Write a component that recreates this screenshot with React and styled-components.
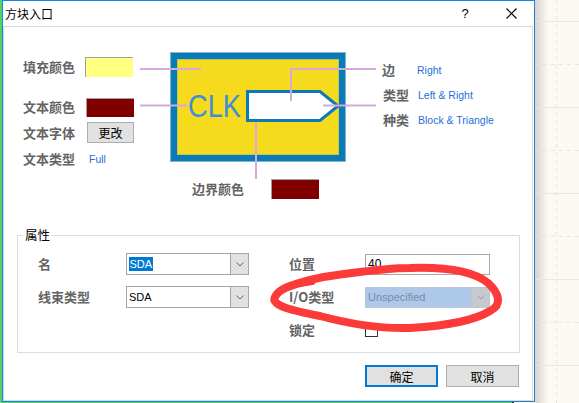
import React from 'react';
import styled, { createGlobalStyle } from 'styled-components';

const GlobalStyle = createGlobalStyle`
  html, body { margin: 0; padding: 0; }
  body {
    width: 579px; height: 403px; overflow: hidden;
    background: #fcf9f4;
    font-family: "Noto Sans CJK SC", "Noto Sans", sans-serif;
  }
`;

const Page = styled.div`
  position: relative;
  display: flex;
  width: 579px;
  height: 403px;
  overflow: hidden;
`;

const EdgeStrip = styled.div`
  flex: none;
  width: 2px;
  background: #50d46e;
`;

const DialogColumn = styled.div`
  flex: none;
  width: 533px;
  display: flex;
  flex-direction: column;
`;

const BottomStrip = styled.div`
  height: 1px;
  background: linear-gradient(to right, #50d46e 510px, #2f2f2f 510px, #2f2f2f 512px, transparent 512px);
`;

const Dialog = styled.div`
  box-sizing: border-box;
  height: 402px;
  border: 1px solid #1a84dc;
  background: #fff;
  display: flex;
  flex-direction: column;
`;

const TitleBar = styled.div`
  flex: none;
  height: 25px;
  display: flex;
  align-items: center;
  padding-left: 2px;
`;

const Title = styled.span`
  flex: 1;
  font-size: 12px;
  line-height: 16px;
  color: #000;
`;

const CaptionButton = styled.div`
  width: 46px;
  height: 25px;
  display: flex;
  align-items: center;
  justify-content: center;
  font: 13px "Liberation Sans", Arial, sans-serif;
  color: #000;
`;

const ClientArea = styled.div`
  flex: 1;
  box-sizing: border-box;
  margin-right: 1px;
  border: 1px solid #d9d9d9;
  display: flex;
  flex-direction: column;
`;

const TopSection = styled.div`
  height: 208px;
  display: flex;
  align-items: flex-start;
`;

const LeftFields = styled.div`
  margin: 30px 0 0 19px;
  display: flex;
  flex-direction: column;
`;

const FieldRow = styled.div`
  display: flex;
  align-items: center;
  height: ${p => p.$h || 20}px;
  margin-top: ${p => p.$gap || 0}px;
`;

const Label = styled.span`
  width: ${p => p.$w || 62}px;
  flex: none;
  font-size: 13px;
  font-weight: 700;
  line-height: 18px;
  color: #646464;
  white-space: nowrap;
`;

const Swatch = styled.div`
  box-sizing: border-box;
  width: 48px;
  height: ${p => p.$h || 20}px;
  margin-left: ${p => p.$shift || 0}px;
  background: ${p => p.$color};
  border-top: 1px solid #a0a0a0;
  border-left: 1px solid #a0a0a0;
`;

const SmallButton = styled.button`
  box-sizing: border-box;
  width: 47px;
  height: 21px;
  margin-left: 2px;
  padding: 0;
  background: #e1e1e1;
  border: 1px solid #adadad;
  font-family: "Noto Sans CJK SC", sans-serif;
  font-size: 12px;
  color: #000;
`;

const LinkValue = styled.span`
  font: 10.5px "Liberation Sans", Arial, sans-serif;
  color: #1f6fd6;
  margin-left: ${p => p.$shift || 0}px;
  white-space: nowrap;
`;

const DiagramColumn = styled.div`
  margin: 25px 0 0 6px;
  display: flex;
  flex-direction: column;
`;

const DiagramSvg = styled.svg`
  display: block;
`;

const BorderRow = styled.div`
  display: flex;
  align-items: center;
  height: 20px;
  padding-left: 52px;
`;

const RightFields = styled.div`
  margin: 30px 0 0 5px;
  display: grid;
  grid-template-columns: 35px auto;
  grid-auto-rows: 25px;
  align-items: center;
`;

const RightLabel = styled(Label)`
  width: auto;
  padding-left: ${p => p.$shift || 0}px;
`;

const GroupBox = styled.div`
  position: relative;
  box-sizing: border-box;
  height: 118px;
  margin: 0 12px 0 13px;
  border: 1px solid #dcdcdc;
  padding: 17px 0 0 20px;
`;

const Legend = styled.span`
  position: absolute;
  top: -10px;
  left: 5px;
  padding: 0 2px;
  background: #fff;
  font-size: 12.5px;
  line-height: 18px;
  color: #000;
`;

const PropGrid = styled.div`
  display: grid;
  grid-template-columns: 88px 123px 40px 76px 125px;
  grid-auto-rows: 22px;
  row-gap: 11px;
  align-items: center;
`;

const Combo = styled.div`
  box-sizing: border-box;
  height: ${p => p.$h || 22}px;
  display: flex;
  border: 1px solid ${p => (p.$disabled ? '#b9c6d6' : '#a6a6a6')};
  background: ${p => (p.$disabled ? '#adc8e9' : '#fff')};
`;

const ComboText = styled.div`
  flex: 1;
  display: flex;
  align-items: center;
  padding-left: 2px;
  font: 11px "Liberation Sans", Arial, sans-serif;
  color: ${p => (p.$disabled ? '#7b8ca3' : '#000')};
`;

const Highlight = styled.span`
  background: #0078d7;
  color: #fff;
  line-height: 14px;
  padding: 0 0.5px;
`;

const ComboButton = styled.div`
  width: 17px;
  display: flex;
  align-items: center;
  justify-content: center;
  border-left: 1px solid ${p => (p.$disabled ? '#c3c6ca' : '#a6a6a6')};
  background: ${p => (p.$disabled ? '#c6c9cd' : '#e1e1e1')};
`;

const TextInput = styled.div`
  box-sizing: border-box;
  height: 21px;
  display: flex;
  align-items: center;
  padding-left: 2px;
  border: 1px solid #a8a8a8;
  font: 12px "Liberation Sans", Arial, sans-serif;
  color: #000;
`;

const CheckBox = styled.div`
  box-sizing: border-box;
  width: 13px;
  height: 13px;
  border: 1px solid #333;
  background: #fff;
`;

const ButtonRow = styled.div`
  display: flex;
  justify-content: flex-end;
  gap: 8px;
  margin: 12px 13px 0 0;
`;

const DialogButton = styled.button`
  box-sizing: border-box;
  width: 73px;
  height: 22px;
  padding: 0;
  background: #e1e1e1;
  border: ${p => (p.$primary ? '2px solid #0078d7' : '1px solid #adadad')};
  font-family: "Noto Sans CJK SC", sans-serif;
  font-size: 12px;
  color: #000;
`;

const Desktop = styled.div`
  flex: 1;
  background: linear-gradient(to right, rgba(70, 55, 40, 0.2), rgba(70, 55, 40, 0) 13px), #fcf9f4;
`;

const Annotation = styled.svg`
  position: absolute;
  left: 262px;
  top: 258px;
  pointer-events: none;
`;

const Chevron = ({ color = '#606060' }) => (
  <svg width="8" height="5" viewBox="0 0 8 5">
    <polyline points="0.5,0.5 4,4 7.5,0.5" fill="none" stroke={color} strokeWidth="1" />
  </svg>
);

const CloseGlyph = () => (
  <svg width="11" height="11" viewBox="0 0 11 11">
    <path d="M0.5 0.5 L10.5 10.5 M10.5 0.5 L0.5 10.5" stroke="#000" strokeWidth="1.1" />
  </svg>
);

const BLUE = '#0b7bb6';
const PINK = '#d6a8dc';

const Diagram = () => (
  <DiagramSvg width="237" height="127" viewBox="0 0 237 127">
    <rect x="30" y="0" width="176" height="110" fill={BLUE} />
    <rect x="30.5" y="0.5" width="175" height="109" fill="none" stroke="#7db6d6" />
    <rect x="37" y="7" width="162" height="96" fill="#f6da1e" />
    <rect x="37.5" y="7.5" width="161" height="95" fill="none" stroke="#b8c85c" />
    <text
      x="48"
      y="65"
      fontFamily="'Liberation Sans', Arial, sans-serif"
      fontSize="31"
      textLength="53"
      lengthAdjust="spacingAndGlyphs"
      fill="#3e8fd3"
    >
      CLK
    </text>
    <polygon
      points="107.5,39.5 180,39.5 198,54 180,68.5 107.5,68.5"
      fill="#fff"
      stroke={BLUE}
      strokeWidth="3"
    />
    <g stroke={PINK} strokeWidth="2" fill="none">
      <line x1="0" y1="17" x2="61" y2="17" />
      <line x1="0" y1="53.5" x2="47" y2="53.5" />
      <polyline points="151,49 151,17 236,17" />
      <line x1="183" y1="53.5" x2="236" y2="53.5" />
      <line x1="116" y1="70" x2="116" y2="127" />
    </g>
  </DiagramSvg>
);

const DesktopGrid = () => {
  const solid = [21, 107, 193, 279, 365];
  const dashed = [64, 150, 236, 322];
  return (
    <svg width="44" height="403" viewBox="0 0 44 403" style={{ display: 'block' }}>
      {solid.map(y => (
        <line key={'s' + y} x1="0" y1={y + 0.5} x2="44" y2={y + 0.5} stroke="#ebe6de" />
      ))}
      {dashed.map(y => (
        <line key={'d' + y} x1="0" y1={y + 0.5} x2="44" y2={y + 0.5} stroke="#ebe4d9" strokeDasharray="4 4" />
      ))}
      <line x1="21.5" y1="0" x2="21.5" y2="403" stroke="#ebe4d9" strokeDasharray="4 4" />
    </svg>
  );
};

export default function App() {
  return (
    <>
      <GlobalStyle />
      <Page>
        <EdgeStrip />
        <DialogColumn>
          <Dialog>
            <TitleBar>
              <Title>方块入口</Title>
              <CaptionButton>?</CaptionButton>
              <CaptionButton>
                <CloseGlyph />
              </CaptionButton>
            </TitleBar>
            <ClientArea>
              <TopSection>
                <LeftFields>
                  <FieldRow>
                    <Label>填充颜色</Label>
                    <Swatch $color="#ffff80" />
                  </FieldRow>
                  <FieldRow $gap={20}>
                    <Label>文本颜色</Label>
                    <Swatch $color="#800000" $shift={1} $h={19} />
                  </FieldRow>
                  <FieldRow $gap={5} $h={21}>
                    <Label>文本字体</Label>
                    <SmallButton>更改</SmallButton>
                  </FieldRow>
                  <FieldRow $gap={6}>
                    <Label>文本类型</Label>
                    <LinkValue $shift={4}>Full</LinkValue>
                  </FieldRow>
                </LeftFields>
                <DiagramColumn>
                  <Diagram />
                  <BorderRow>
                    <Label $w={79}>边界颜色</Label>
                    <Swatch $color="#800000" />
                  </BorderRow>
                </DiagramColumn>
                <RightFields>
                  <RightLabel>边</RightLabel>
                  <LinkValue>Right</LinkValue>
                  <RightLabel $shift={1}>类型</RightLabel>
                  <LinkValue $shift={1}>Left &amp; Right</LinkValue>
                  <RightLabel $shift={1}>种类</RightLabel>
                  <LinkValue $shift={1}>Block &amp; Triangle</LinkValue>
                </RightFields>
              </TopSection>
              <GroupBox>
                <Legend>属性</Legend>
                <PropGrid>
                  <Label>名</Label>
                  <Combo>
                    <ComboText>
                      <Highlight>SDA</Highlight>
                    </ComboText>
                    <ComboButton>
                      <Chevron />
                    </ComboButton>
                  </Combo>
                  <span />
                  <Label>位置</Label>
                  <TextInput>40</TextInput>

                  <Label>线束类型</Label>
                  <Combo>
                    <ComboText>SDA</ComboText>
                    <ComboButton>
                      <Chevron />
                    </ComboButton>
                  </Combo>
                  <span />
                  <Label>I/O类型</Label>
                  <Combo $disabled $h={21}>
                    <ComboText $disabled>Unspecified</ComboText>
                    <ComboButton $disabled>
                      <Chevron color="#9aa0a8" />
                    </ComboButton>
                  </Combo>

                  <span />
                  <span />
                  <span />
                  <Label>锁定</Label>
                  <CheckBox />
                </PropGrid>
              </GroupBox>
              <ButtonRow>
                <DialogButton $primary>确定</DialogButton>
                <DialogButton>取消</DialogButton>
              </ButtonRow>
            </ClientArea>
          </Dialog>
          <BottomStrip />
        </DialogColumn>
        <Desktop>
          <DesktopGrid />
        </Desktop>
        <Annotation width="250" height="80" viewBox="262 258 250 80">
          <path
            d="M285 288 C305 280 320 277 337 275 C360 272 385 268 410 268 C440 267 472 270 488 283 C500 294 502 305 490 311 C475 320 445 326 410 328 C380 329 350 324 320 316 C295 311 270 306 275 297 C278 290 290 284 312 281"
            fill="none"
            stroke="#fd3a3a"
            strokeWidth="8"
            strokeLinecap="round"
            strokeLinejoin="round"
          />
        </Annotation>
      </Page>
    </>
  );
}
